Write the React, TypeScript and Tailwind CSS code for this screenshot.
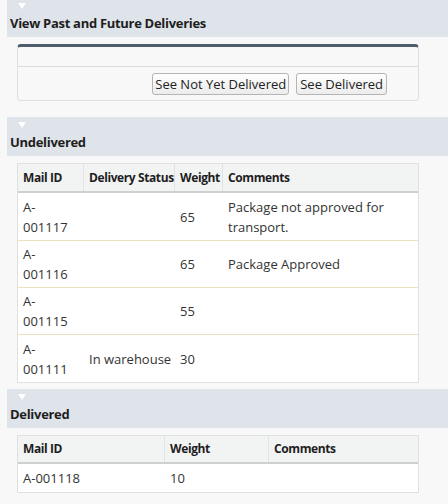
import React from "react";

function SectionHeader({ title, first }: { title: string; first?: boolean }) {
  return (
    <div className={`ml-[7px] bg-[#dfe4ea] relative ${first ? "h-[37px]" : "h-[39px]"}`}>
      <svg className={`absolute left-[11px] ${first ? "top-[3px]" : "top-[5px]"}`} width="8" height="6" viewBox="0 0 8 6">
        <polygon points="0,0 8,0 4,6" fill="#ffffff" />
      </svg>
      <div
        className={`absolute left-[3px] ${first ? "top-[13px]" : "top-[15px]"} text-[13px] leading-[20px] font-bold text-[#1e1e1e] tracking-[-0.3px] whitespace-nowrap`}
      >
        {title}
      </div>
    </div>
  );
}

const undelivered = [
  { id: ["A-", "001117"], status: "", weight: "65", comments: ["Package not approved for", "transport."], h: "h-[48px]" },
  { id: ["A-", "001116"], status: "", weight: "65", comments: ["Package Approved"], h: "h-[47px]" },
  { id: ["A-", "001115"], status: "", weight: "55", comments: [], h: "h-[47px]" },
  { id: ["A-", "001111"], status: "In warehouse", weight: "30", comments: [], h: "h-[47px]" },
];

const th = "px-[5px] flex items-center whitespace-nowrap tracking-[-0.4px]";

export default function App() {
  return (
    <div
      className="w-[448px] h-[504px] bg-[#f8f8f8] overflow-hidden text-[#333333]"
      style={{ fontFamily: '"Open Sans", "Noto Sans", sans-serif' }}
    >
      <SectionHeader title="View Past and Future Deliveries" first />
      <div className="mt-[7px] ml-[17px] w-[402px] h-[57px] border border-[#dfdfdf] border-t-[3px] border-t-[#4f5d6c] rounded-[4px] bg-[#f8f8f8] flex flex-col">
        <div className="h-[20px] border-b border-[#dcdcdc]"></div>
        <div className="flex-1 flex items-start justify-end gap-[7px] pt-[6px] pr-[31px]">
          <button className="h-[22px] px-[2px] border border-[#b5b5b5] rounded-[3px] bg-gradient-to-b from-white to-[#ececec] text-[13px] leading-[18px] text-[#222]">
            See Not Yet Delivered
          </button>
          <button className="h-[22px] px-[3px] border border-[#b5b5b5] rounded-[3px] bg-gradient-to-b from-white to-[#ececec] text-[13px] leading-[18px] text-[#222]">
            See Delivered
          </button>
        </div>
      </div>

      <div className="mt-[16px]">
        <SectionHeader title="Undelivered" />
      </div>
      <div className="mt-[7px] ml-[17px] w-[402px] border border-[#e0e0e0] bg-white text-[13px]">
        <div className="grid grid-cols-[66px_91px_48px_1fr] h-[29px] bg-[#f2f3f3] border-b-2 border-[#cfcfcf] font-bold text-[#1e1e1e] text-[12px]">
          <div className={`${th} border-r border-[#e0e3e5]`}>Mail ID</div>
          <div className={`${th} border-r border-[#e0e3e5]`}>Delivery Status</div>
          <div className={`${th} border-r border-[#e0e3e5]`}>Weight</div>
          <div className={th}>Comments</div>
        </div>
        {undelivered.map((r, i) => (
          <div
            key={i}
            className={`grid grid-cols-[66px_91px_48px_1fr] items-center leading-[20px] ${r.h} ${i < undelivered.length - 1 ? "border-b border-[#e8e2bf]" : ""}`}
          >
            <div className="px-[5px]">
              <div>{r.id[0]}</div>
              <div>{r.id[1]}</div>
            </div>
            <div className="px-[5px] whitespace-nowrap">{r.status}</div>
            <div className="px-[5px]">{r.weight}</div>
            <div className="px-[5px] flex flex-col">
              {r.comments.map((c, j) => (
                <div key={j}>{c}</div>
              ))}
            </div>
          </div>
        ))}
      </div>

      <div className="mt-[6px]">
        <SectionHeader title="Delivered" />
      </div>
      <div className="mt-[7px] ml-[17px] w-[402px] border border-[#e0e0e0] bg-white text-[13px]">
        <div className="grid grid-cols-[147px_104px_1fr] h-[28px] bg-[#f2f3f3] border-b-2 border-[#cfcfcf] font-bold text-[#1e1e1e] text-[12px]">
          <div className={`${th} border-r border-[#e0e3e5]`}>Mail ID</div>
          <div className={`${th} border-r border-[#e0e3e5]`}>Weight</div>
          <div className={th}>Comments</div>
        </div>
        <div className="grid grid-cols-[147px_104px_1fr] items-center leading-[20px] h-[28px]">
          <div className="px-[5px]">A-001118</div>
          <div className="px-[5px]">10</div>
          <div className="px-[5px]"></div>
        </div>
      </div>
    </div>
  );
}
